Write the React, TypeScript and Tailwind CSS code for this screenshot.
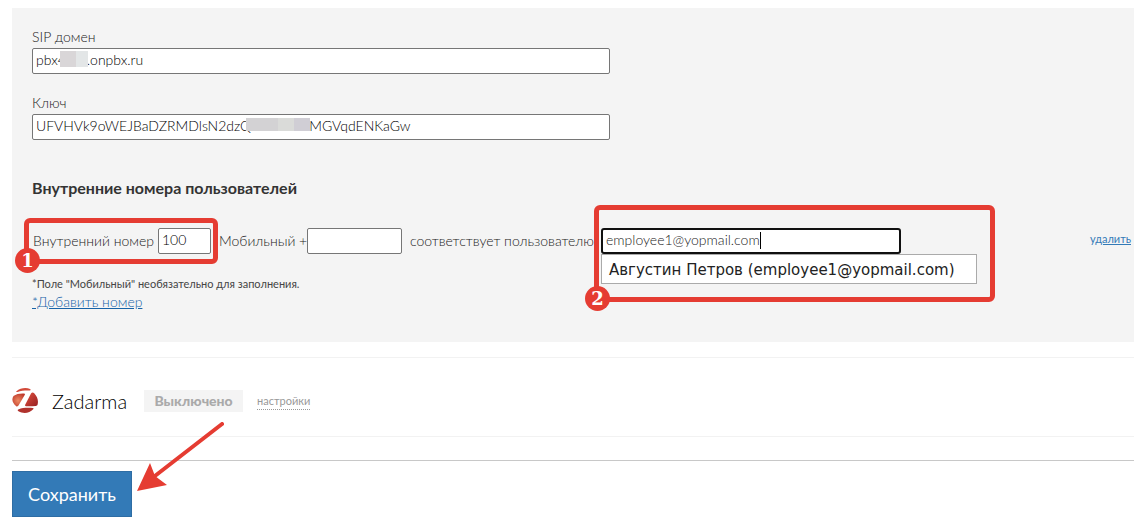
import type { ReactNode } from "react";

const FIELD =
  "block h-[26px] rounded-[2px] border border-[#767676] bg-white px-[3px] pb-[3px] text-sm font-light text-black outline-none";

function TextField({
  id,
  label,
  value,
  children,
}: {
  id: string;
  label: string;
  value: string;
  children?: ReactNode;
}) {
  return (
    <div>
      <label htmlFor={id} className="mb-0.5 block leading-[18px]">
        {label}
      </label>
      <div className="relative max-w-[578px]">
        <input id={id} type="text" defaultValue={value} className={`${FIELD} w-full`} />
        {children}
      </div>
    </div>
  );
}

function Badge({ children }: { children: ReactNode }) {
  return (
    <span className="absolute -bottom-[14px] -left-[14px] flex size-[25px] items-center justify-center rounded-full bg-[#e53c32] font-['DejaVu_Serif',serif] text-lg leading-none font-bold text-white">
      {children}
    </span>
  );
}

function ZadarmaLogo() {
  return (
    <svg viewBox="0 0 26 26" className="size-[26px] shrink-0" aria-hidden="true">
      <defs>
        <radialGradient id="zl" cx="0.45" cy="0.55" r="0.6">
          <stop offset="0" stopColor="#ee8a62" />
          <stop offset="1" stopColor="#bf3a2c" />
        </radialGradient>
        <linearGradient id="zr" x1="0" y1="0" x2="1" y2="1">
          <stop offset="0" stopColor="#e2523f" />
          <stop offset="1" stopColor="#961f22" />
        </linearGradient>
      </defs>
      <path d="M4.500 3.200C8 0 14-.6 18 .9c1 .5.900 1.400-.2 1.500C13 2.300 9 2.500 5.500 3.900c-1.200.4-1.700 0-1-.7Z" fill="#d24a3a" />
      <path d="M1.500 8C4 6 8 5.300 12 5.500c1 .1 1.300.8.7 1.600L6.500 17.600c-.6.900-1.700 1.100-2.500.3C.3 15-.6 11 1.500 8Z" fill="url(#zl)" />
      <path d="M19 5.500c.8-1.200 2-1.400 3-.4 3.500 3.700 4.600 7.700 3.600 11.400-.3 1-.9 1.300-1.800 1.400-3 .4-6 .5-9.600.4-1.200-.1-1.500-.9-.9-1.900Z" fill="url(#zr)" />
      <path d="M6.300 21.500c4.500-2 10-1.800 14.500-1.500.9.100 1.100.6.400 1.300-3.500 3.700-9.500 5-14.700 2-1.100-.7-1-1.400-.2-1.800Z" fill="#b0322d" />
    </svg>
  );
}

export default function App() {
  return (
    <main className="bg-white pt-2 pl-3 font-['Lato','Liberation_Sans',sans-serif] text-sm font-light text-[#222]">
      <section className="bg-[#f4f4f4] px-5 pt-5 pb-8">
        <div className="flex flex-col gap-5">
          <TextField id="domain" label="SIP домен" value={"pbx4\u2003\u2002\u2005.onpbx.ru"}>
            <span className="absolute top-[3px] left-[28px] flex h-4">
              <span className="w-4 bg-[#d9d6d8]" />
              <span className="w-3 bg-[#e3e6e7]" />
            </span>
          </TextField>
          <TextField
            id="key"
            label="Ключ"
            value={"UFVHVk9oWEJBaDZRMDlsN2dzQ\u2003\u2003\u2003\u2003\u2002\u200aEMGVqdENKaGw"}
          >
            <span className="absolute top-1 left-[214px] flex h-[13px]">
              <span className="w-8 bg-[#d3d2d4]" />
              <span className="w-4 bg-[#dadbd9]" />
              <span className="w-4 bg-[#d0ced5]" />
            </span>
          </TextField>
        </div>

        <h2 className="mt-9 text-base leading-6 font-bold text-[#333]">
          Внутренние номера пользователей
        </h2>

        <div className="mt-7 flex h-[26px] items-center">
          <div className="relative flex items-center">
            <label htmlFor="ext" className="w-[126px] pl-px leading-[22px]">
              Внутренний номер
            </label>
            <input id="ext" type="text" defaultValue="100" className={`${FIELD} w-[53px]`} />
            <div className="pointer-events-none absolute -inset-y-[10px] -right-[7px] -left-2 rounded-md border-[5px] border-[#e53c32]">
              <Badge>1</Badge>
            </div>
          </div>
          <label htmlFor="mobile" className="ml-2 flex w-[88px] justify-between">
            <span>Мобильный</span>
            <span>+</span>
          </label>
          <input id="mobile" type="text" className={`${FIELD} w-[95px]`} />
          <label htmlFor="user" className="ml-2 w-[191px] whitespace-nowrap">
            соответствует пользователю
          </label>
          <div className="relative w-[300px]">
            <input
              id="user"
              type="text"
              defaultValue="employee1@yopmail.com"
              className="block h-[26px] w-full rounded-[3px] border-2 border-[#101010] bg-white px-[3px] pb-[3px] text-sm font-light text-[#222] outline-none"
            />
            <span className="absolute top-1 left-[159px] h-[17px] w-px bg-black" />
            <ul className="absolute top-full left-0 w-[376px] border border-[#aaa] bg-white px-[7px] font-['DejaVu_Sans',sans-serif] text-[15px] leading-[30px] font-normal whitespace-nowrap text-[#222]">
              <li className="h-7">Августин Петров (employee1@yopmail.com)</li>
            </ul>
            <div className="pointer-events-none absolute -top-[23px] -left-[7px] h-[97px] w-[401px] rounded-md border-[5px] border-[#e53c32]">
              <Badge>2</Badge>
            </div>
          </div>
          <a href="#delete" className="-mr-[17px] mb-1 ml-auto text-[11px] leading-5 font-normal text-[#337ab7] underline">
            удалить
          </a>
        </div>

        <p className="mt-5 text-[11px] leading-5 font-normal text-[#444]">
          *Поле "Мобильный" необязательно для заполнения.
        </p>
        <a href="#add" className="block w-fit leading-4 text-[#1763a8] underline">
          *Добавить номер
        </a>
      </section>

      <section className="mt-[15px] flex h-20 items-center border-y border-[#f2f2f2] pt-2">
        <ZadarmaLogo />
        <h3 className="ml-[14px] text-xl leading-6 font-light text-black">Zadarma</h3>
        <span className="ml-[17px] w-[99px] bg-[#f4f4f4] text-center leading-[22px] font-black text-[#aaa]">
          Выключено
        </span>
        <a href="#settings" className="ml-[14px] border-b border-dotted border-[#999] text-[11px] leading-4 font-normal text-[#999]">
          настройки
        </a>
      </section>

      <footer className="relative mt-[23px] border-t border-[#c8c8c8] py-[10px]">
        <button type="button" className="block h-[46px] w-[120px] border border-[#2e6da4] bg-[#337ab7] text-lg font-normal text-white">
          Сохранить
        </button>
        <svg viewBox="0 0 88 72" className="pointer-events-none absolute -top-[39px] left-[124px] h-[72px] w-[88px]" aria-hidden="true">
          <path d="M86 2 15 57" stroke="#e53c32" strokeWidth="4" strokeLinecap="round" fill="none" />
          <path d="M1 69 14 41l5 13 12 9Z" fill="#e53c32" />
        </svg>
      </footer>
    </main>
  );
}
